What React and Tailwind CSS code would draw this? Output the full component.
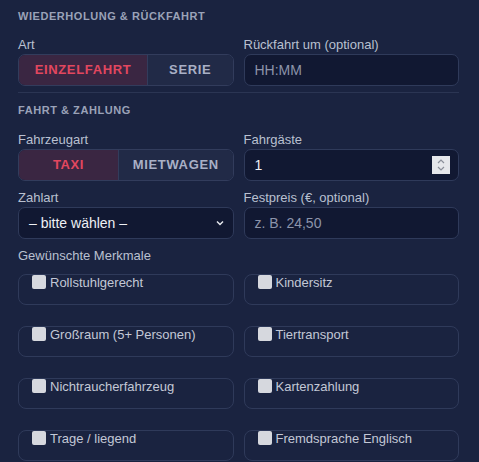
import React from "react";

const font = { fontFamily: '"Liberation Sans", Arial, sans-serif' };

function Seg({ items }) {
  return (
    <div className="flex h-[32px] rounded-[7px] border border-[#323c5c] overflow-hidden">
      {items.map((it, i) => (
        <div
          key={i}
          className={
            "flex items-center justify-center text-[13px] font-bold tracking-wider " +
            it.w +
            (it.active
              ? " bg-[#3a2642] text-[#e2475f]"
              : " bg-[#212a47] text-[#a9b0c6]") +
            (i > 0 ? " border-l border-[#323c5c]" : "")
          }
        >
          {it.label}
        </div>
      ))}
    </div>
  );
}

function Label({ children }) {
  return <div className="text-[13px] leading-[15px] text-[#b9c0d0] mb-[2px]">{children}</div>;
}

function Heading({ children }) {
  return (
    <div className="text-[11px] leading-[13px] font-bold tracking-wider text-[#9aa2b8]">{children}</div>
  );
}

function Card({ label }) {
  return (
    <div className="h-[31px] rounded-[8px] border border-[#2f3a5a] flex items-start pl-[13px]">
      <div className="w-[14px] h-[14px] bg-[#d6d8de] rounded-[2px] shrink-0" />
      <span className="ml-[4px] text-[13px] leading-[16px] text-[#c3c8d6]">{label}</span>
    </div>
  );
}

export default function App() {
  const feats = [
    ["Rollstuhlgerecht", "Kindersitz"],
    ["Großraum (5+ Personen)", "Tiertransport"],
    ["Nichtraucherfahrzeug", "Kartenzahlung"],
    ["Trage / liegend", "Fremdsprache Englisch"],
  ];
  return (
    <div style={font} className="w-[479px] h-[462px] bg-[#1a2340] overflow-hidden pl-[18px] pr-[20px] pt-[10px]">
      <Heading>WIEDERHOLUNG &amp; RÜCKFAHRT</Heading>
      <div className="grid grid-cols-2 gap-x-[10px] mt-[14px]">
        <div>
          <Label>Art</Label>
          <Seg
            items={[
              { label: "EINZELFAHRT", active: true, w: "w-[128px]" },
              { label: "SERIE", w: "flex-1" },
            ]}
          />
        </div>
        <div>
          <Label>Rückfahrt um (optional)</Label>
          <div className="h-[32px] rounded-[7px] border border-[#2f3a5a] bg-[#111832] flex items-center px-[10px] text-[14px] text-[#8c94aa]">
            HH:MM
          </div>
        </div>
      </div>
      <div className="h-px bg-[#2b3553] mt-[6px]" />
      <div className="mt-[11px]">
        <Heading>FAHRT &amp; ZAHLUNG</Heading>
      </div>
      <div className="grid grid-cols-2 gap-x-[10px] gap-y-[9px] mt-[15px]">
        <div>
          <Label>Fahrzeugart</Label>
          <Seg
            items={[
              { label: "TAXI", active: true, w: "w-[99px]" },
              { label: "MIETWAGEN", w: "flex-1" },
            ]}
          />
        </div>
        <div>
          <Label>Fahrgäste</Label>
          <div className="h-[32px] rounded-[7px] border border-[#2f3a5a] bg-[#111832] flex items-center pl-[10px] pr-[8px] text-[14px] text-[#eef0f5]">
            <span className="flex-1">1</span>
            <div className="w-[18px] h-[18px] bg-[#e6e7ea] flex items-center justify-center">
              <svg width="10" height="14" viewBox="0 0 10 14" fill="none" stroke="#8b8f99" strokeWidth="1.2">
                <path d="M2 5 L5 2 L8 5" />
                <path d="M2 9 L5 12 L8 9" />
              </svg>
            </div>
          </div>
        </div>
        <div>
          <Label>Zahlart</Label>
          <div className="h-[32px] rounded-[7px] border border-[#2f3a5a] bg-[#111832] flex items-center pl-[10px] pr-[8px] text-[14px] text-[#eef0f5]">
            <span className="flex-1">– bitte wählen –</span>
            <svg width="10" height="8" viewBox="0 0 10 8" fill="none" stroke="#e6e8ee" strokeWidth="1.5">
              <path d="M2 2.5 L5 5.5 L8 2.5" />
            </svg>
          </div>
        </div>
        <div>
          <Label>Festpreis (€, optional)</Label>
          <div className="h-[32px] rounded-[7px] border border-[#2f3a5a] bg-[#111832] flex items-center px-[10px] text-[14px] text-[#8c94aa]">
            z. B. 24,50
          </div>
        </div>
      </div>
      <div className="mt-[9px]">
        <Label>Gewünschte Merkmale</Label>
      </div>
      <div className="grid grid-cols-2 gap-x-[10px] gap-y-[21px] mt-[11px]">
        {feats.flat().map((f) => (
          <Card key={f} label={f} />
        ))}
      </div>
    </div>
  );
}
